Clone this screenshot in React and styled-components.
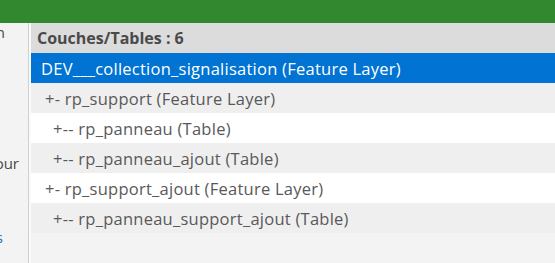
import React from "react";
import styled, { createGlobalStyle } from "styled-components";

const GlobalStyle = createGlobalStyle`
  html, body {
    margin: 0;
    padding: 0;
    width: 555px;
    height: 263px;
    overflow: hidden;
    background: #f4f4f4;
    font-family: "Open Sans", Lato, sans-serif;
  }
`;

const Page = styled.div`
  display: flex;
  flex-direction: column;
  height: 263px;
`;

const TopBar = styled.div`
  height: 23px;
  background: #31882f;
  flex-shrink: 0;
`;

const Body = styled.div`
  display: flex;
  flex: 1;
  min-height: 0;
`;

const Sidebar = styled.aside`
  width: 28px;
  flex-shrink: 0;
  background: #f3f3f3;
  border-right: 1px solid #cfcfcf;
  overflow: hidden;
  display: flex;
  flex-direction: column;
  align-items: flex-end;
  font-size: 15px;
  white-space: nowrap;
`;

const SideLine = styled.div`
  height: 18px;
  line-height: 18px;
  margin-top: ${(p) => p.top}px;
  margin-right: ${(p) => p.right}px;
  color: ${(p) => (p.link ? "#1c6fc4" : "#4a4a4a")};
`;

const Gap = styled.div`
  width: 2px;
  background: #fafafa;
  flex-shrink: 0;
`;

const Panel = styled.section`
  flex: 1;
  display: flex;
  flex-direction: column;
  background: #f3f3f3;
`;

const PanelHeader = styled.div`
  height: 30px;
  background: #dcdcdc;
  display: flex;
  align-items: center;
  padding-left: 6px;
  font-weight: 700;
  font-size: 16px;
  color: #4a4a4a;
`;

const Row = styled.div`
  height: 30px;
  display: flex;
  align-items: center;
  padding-left: ${(p) => p.indent}px;
  font-size: 16.5px;
  letter-spacing: 0.25px;
  white-space: nowrap;
  background: ${(p) => (p.selected ? "#0073d3" : p.odd ? "#efefef" : "#ffffff")};
  color: ${(p) => (p.selected ? "#ffffff" : "#595959")};
`;

const rows = [
  { label: "DEV___collection_signalisation (Feature Layer)", indent: 10, selected: true },
  { label: "+- rp_support (Feature Layer)", indent: 14 },
  { label: "+-- rp_panneau (Table)", indent: 22 },
  { label: "+-- rp_panneau_ajout (Table)", indent: 22 },
  { label: "+- rp_support_ajout (Feature Layer)", indent: 14 },
  { label: "+-- rp_panneau_support_ajout (Table)", indent: 22 },
];

export default function App() {
  return (
    <Page>
      <GlobalStyle />
      <TopBar />
      <Body>
        <Sidebar>
          <SideLine top={0} right={23}>n</SideLine>
          <SideLine top={113} right={9}>our</SideLine>
          <SideLine top={56} right={25} link>s</SideLine>
        </Sidebar>
        <Gap />
        <Panel>
          <PanelHeader>Couches/Tables : 6</PanelHeader>
          {rows.map((r, i) => (
            <Row key={r.label} indent={r.indent} selected={r.selected} odd={i % 2 === 1}>
              {r.label}
            </Row>
          ))}
        </Panel>
      </Body>
    </Page>
  );
}
